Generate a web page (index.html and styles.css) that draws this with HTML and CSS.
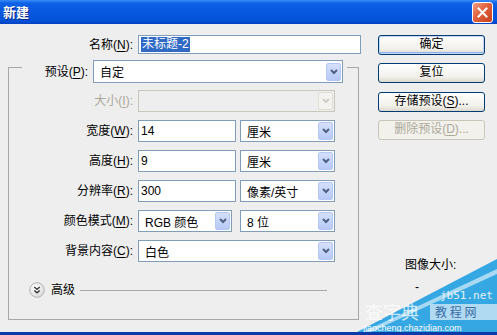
FILE: index.html
```html
<!DOCTYPE html>
<html lang="zh-CN">
<head>
  <meta charset="UTF-8" />
  <meta name="viewport" content="width=device-width, initial-scale=1.0"/>
  <title>新建</title>
  <link rel="stylesheet" href="styles.css">
</head>
<body>
  <div class="window">
    <div class="titlebar">
      <span class="title">新建</span>
      <span class="close">
        <svg width="11" height="11" viewBox="0 0 11 11"><path d="M1.5 1.5 L9.5 9.5 M9.5 1.5 L1.5 9.5" stroke="#fff" stroke-width="2" stroke-linecap="square"/></svg>
      </span>
    </div>

    <div class="body">
      <div class="main">
        <div class="name-row">
          <label class="lbl name-lbl">名称(<u>N</u>):</label>
          <div class="field name-field"><span class="selected">未标题-2</span></div>
        </div>

        <div class="group">
          <div class="preset-row">
            <label class="lbl preset-lbl">预设(<u>P</u>):</label>
            <div class="combo preset-combo">
              <span class="val">自定</span>
              <span class="arrow"><svg width="8" height="6" viewBox="0 0 8 6"><polyline points="1,1 4,4 7,1" fill="none" stroke="#4d6185" stroke-width="2"/></svg></span>
            </div>
          </div>

          <div class="row first">
            <label class="lbl disabled">大小(<u>I</u>):</label>
            <div class="combo wide off">
              <span class="val"></span>
              <span class="arrow"><svg width="8" height="6" viewBox="0 0 8 6"><polyline points="1,1 4,4 7,1" fill="none" stroke="#cfcdc4" stroke-width="2"/></svg></span>
            </div>
          </div>

          <div class="row">
            <label class="lbl">宽度(<u>W</u>):</label>
            <div class="field num">14</div>
            <div class="combo unit">
              <span class="val">厘米</span>
              <span class="arrow"><svg width="8" height="6" viewBox="0 0 8 6"><polyline points="1,1 4,4 7,1" fill="none" stroke="#4d6185" stroke-width="2"/></svg></span>
            </div>
          </div>

          <div class="row">
            <label class="lbl">高度(<u>H</u>):</label>
            <div class="field num">9</div>
            <div class="combo unit">
              <span class="val">厘米</span>
              <span class="arrow"><svg width="8" height="6" viewBox="0 0 8 6"><polyline points="1,1 4,4 7,1" fill="none" stroke="#4d6185" stroke-width="2"/></svg></span>
            </div>
          </div>

          <div class="row">
            <label class="lbl">分辨率(<u>R</u>):</label>
            <div class="field num">300</div>
            <div class="combo unit">
              <span class="val">像素/英寸</span>
              <span class="arrow"><svg width="8" height="6" viewBox="0 0 8 6"><polyline points="1,1 4,4 7,1" fill="none" stroke="#4d6185" stroke-width="2"/></svg></span>
            </div>
          </div>

          <div class="row">
            <label class="lbl">颜色模式(<u>M</u>):</label>
            <div class="combo mode">
              <span class="val">RGB 颜色</span>
              <span class="arrow"><svg width="8" height="6" viewBox="0 0 8 6"><polyline points="1,1 4,4 7,1" fill="none" stroke="#4d6185" stroke-width="2"/></svg></span>
            </div>
            <div class="combo unit">
              <span class="val">8 位</span>
              <span class="arrow"><svg width="8" height="6" viewBox="0 0 8 6"><polyline points="1,1 4,4 7,1" fill="none" stroke="#4d6185" stroke-width="2"/></svg></span>
            </div>
          </div>

          <div class="row">
            <label class="lbl">背景内容(<u>C</u>):</label>
            <div class="combo wide">
              <span class="val">白色</span>
              <span class="arrow"><svg width="8" height="6" viewBox="0 0 8 6"><polyline points="1,1 4,4 7,1" fill="none" stroke="#4d6185" stroke-width="2"/></svg></span>
            </div>
          </div>

          <div class="advanced">
            <span class="toggle">
              <svg width="16" height="16" viewBox="0 0 16 16">
                <defs>
                  <radialGradient id="tg" cx="0.4" cy="0.35" r="0.7">
                    <stop offset="0" stop-color="#ffffff"/>
                    <stop offset="1" stop-color="#d9d9d9"/>
                  </radialGradient>
                </defs>
                <circle cx="8" cy="8" r="7.3" fill="url(#tg)" stroke="#b4b4b4"/>
                <polyline points="5.3,5 8,7.4 10.7,5" fill="none" stroke="#333" stroke-width="1.4"/>
                <polyline points="5.3,8.4 8,10.8 10.7,8.4" fill="none" stroke="#333" stroke-width="1.4"/>
              </svg>
            </span>
            <span class="adv-text">高级</span>
            <span class="adv-line"></span>
          </div>
        </div>
      </div>

      <div class="side">
        <div class="btn default">确定</div>
        <div class="btn">复位</div>
        <div class="btn">存储预设(<u>S</u>)...</div>
        <div class="btn off">删除预设(<u>D</u>)...</div>
        <div class="info">
          <div>图像大小:</div>
          <div class="dash">-</div>
        </div>
      </div>
    </div>

    <svg class="watermark" width="140" height="85" viewBox="0 0 140 85">
      <polygon points="0,85 140,12 140,85" fill="#35a7e2"/>
      <polygon points="6,85 140,22 140,27 14,85" fill="#d9eefa" opacity="0.7"/>
      <rect x="73" y="57" width="67" height="16" fill="#cfe6f6" opacity="0.8"/>
      <text x="83" y="52" class="wm-url">jb51.net</text>
      <text x="8" y="72" class="wm-big">查字典</text>
      <text x="78" y="70" class="wm-mid">教 程 网</text>
      <text x="6" y="84" class="wm-small">jiaocheng.chazidian.com</text>
    </svg>
  </div>
</body>
</html>
```

FILE: styles.css
```css
html, body {
  margin: 0;
  padding: 0;
}

body {
  background: #eeeeee;
  font-family: "Liberation Sans", "Noto Sans CJK SC", sans-serif;
  font-size: 12px;
  color: #000;
}

.window {
  position: relative;
  width: 497px;
  height: 335px;
  box-sizing: border-box;
  background: #eeeeee;
  border-bottom: 3px solid #0c3aa8;
  overflow: hidden;
}

.titlebar {
  height: 24px;
  display: flex;
  align-items: center;
  justify-content: space-between;
  padding: 0 4px 0 3px;
  background: linear-gradient(#3a8cf6 0, #0e62e6 3px, #0858e0 45%, #0552d8 85%, #0444c4 100%);
}

.title {
  color: #fff;
  font-weight: bold;
  font-size: 13px;
  font-family: "Noto Sans CJK SC", sans-serif;
  text-shadow: 1px 1px 0 #0a2a8a;
  line-height: 24px;
}

.close {
  width: 21px;
  height: 21px;
  box-sizing: border-box;
  border: 1px solid #fff;
  border-radius: 3px;
  background: linear-gradient(135deg, #f0a080 0, #e2603c 45%, #c6401e 100%);
  display: flex;
  align-items: center;
  justify-content: center;
}

.body {
  display: flex;
}

.main {
  width: 370px;
  padding-top: 11px;
}

.lbl {
  text-align: right;
  white-space: nowrap;
  line-height: 16px;
}

.lbl u {
  text-decoration-thickness: 1px;
  text-underline-offset: 2px;
}

.lbl.disabled {
  color: #aca899;
}

.name-row {
  display: flex;
  align-items: center;
  height: 19px;
}

.name-lbl {
  width: 133px;
  margin-right: 5px;
}

.field {
  box-sizing: border-box;
  border: 1px solid #7f9db9;
  background: #fff;
  display: flex;
  align-items: center;
  padding-left: 2px;
}

.name-field {
  width: 223px;
  height: 19px;
}

.selected {
  background: #316ac5;
  color: #fff;
  line-height: 15px;
  padding: 0 1px;
}

.group {
  box-sizing: border-box;
  margin: 13px 0 0 8px;
  width: 351px;
  height: 253px;
  border: 1px solid #a7a7a7;
}

.preset-row {
  display: flex;
  align-items: center;
  margin: -8px 0 0 13px;
  width: 325px;
  height: 23px;
  background: #eeeeee;
}

.preset-lbl {
  width: 66px;
  margin-right: 5px;
}

.combo {
  box-sizing: border-box;
  height: 22px;
  border: 1px solid #7f9db9;
  background: #fff;
  display: flex;
  align-items: center;
}

.combo .val {
  flex: 1;
  padding-left: 6px;
  white-space: nowrap;
}

.arrow {
  box-sizing: border-box;
  width: 15px;
  height: 18px;
  margin-right: 1px;
  border: 1px solid #b5c8f4;
  border-radius: 2px;
  background: linear-gradient(#d5e0fb, #b6c9f6);
  display: flex;
  align-items: center;
  justify-content: center;
}

.preset-combo {
  width: 250px;
  height: 23px;
}

.row {
  display: flex;
  align-items: center;
  height: 22px;
  margin-top: 8px;
}

.row.first {
  margin-top: 7px;
}

.row .lbl {
  width: 124px;
  margin-right: 5px;
}

.combo.wide {
  width: 197px;
}

.combo.off {
  border-color: #c9c7ba;
  background: #eeeeee;
}

.combo.off .arrow {
  border-color: #e0ded6;
  background: #f3f3f0;
}

.field.num {
  width: 98px;
  height: 22px;
  margin-right: 4px;
}

.combo.unit {
  width: 95px;
}

.combo.mode {
  width: 94px;
  margin-right: 8px;
}

.advanced {
  display: flex;
  align-items: center;
  height: 16px;
  margin: 20px 31px 0 20px;
}

.toggle {
  display: flex;
  width: 16px;
  height: 16px;
}

.adv-text {
  margin: 0 5px 0 6px;
  line-height: 16px;
}

.adv-line {
  flex: 1;
  height: 1px;
  background: #a7a7a7;
}

.side {
  margin-left: 8px;
  padding-top: 11px;
  display: flex;
  flex-direction: column;
  gap: 8.4px;
}

.btn {
  box-sizing: border-box;
  width: 107px;
  height: 20px;
  border: 1px solid #003c74;
  border-radius: 3px;
  background: linear-gradient(#ffffff, #f2f1ec 70%, #dcd8cc);
  text-align: center;
  line-height: 17px;
  white-space: nowrap;
}

.btn u {
  text-underline-offset: 2px;
}

.btn.default {
  box-shadow: inset 0 0 0 1px #c2d6f7, inset 0 -1px 0 1px #8fb0ec;
}

.btn.off {
  border-color: #c9c7ba;
  color: #aca899;
  background: #f2f1ec;
}

.info {
  margin: 109px 0 0 27px;
  line-height: 14px;
}

.dash {
  margin: 8px 0 0 10px;
}

.watermark {
  position: absolute;
  right: 0;
  bottom: 0;
}

.wm-url {
  font-family: "DejaVu Sans Mono", monospace;
  font-size: 11px;
  fill: #e2f2fc;
}

.wm-big {
  font-family: "Noto Sans CJK SC", sans-serif;
  font-size: 18px;
  fill: #ffffff;
  fill-opacity: 0.75;
}

.wm-mid {
  font-family: "Noto Sans CJK SC", sans-serif;
  font-size: 12px;
  fill: #3a6ea5;
}

.wm-small {
  font-family: "Liberation Sans", sans-serif;
  font-size: 9px;
  fill: #ffffff;
}
```
